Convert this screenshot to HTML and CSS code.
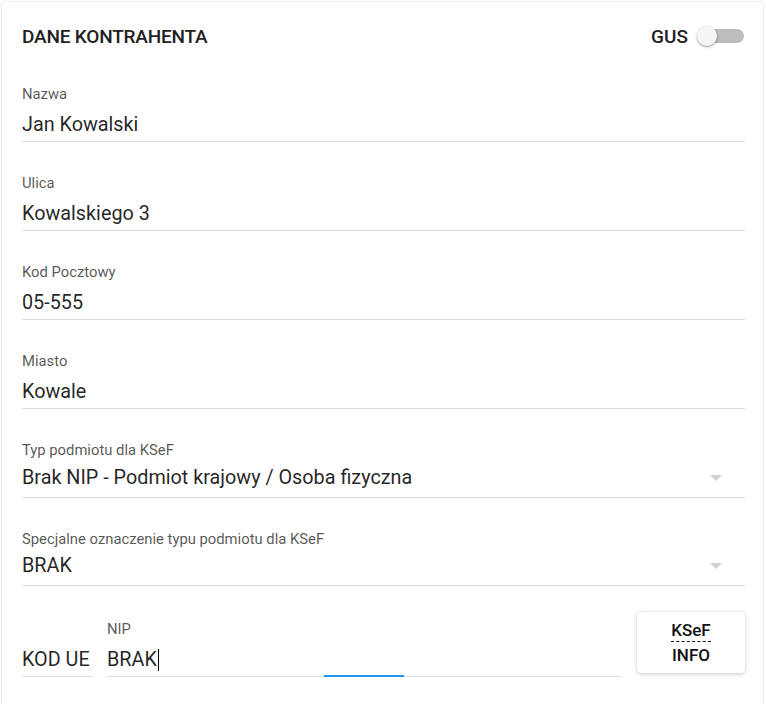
FILE: index.html
```html
<!DOCTYPE html>
<html lang="pl">
<head>
<meta charset="utf-8">
<link rel="stylesheet" href="styles.css">
</head>
<body>
<div class="page">
  <div class="card">
    <div class="card-header">
      <div class="title">DANE KONTRAHENTA</div>
      <div class="gus">
        <span class="gus-label">GUS</span>
        <span class="switch"><span class="track"></span><span class="thumb"></span></span>
      </div>
    </div>

    <div class="field">
      <div class="label">Nazwa</div>
      <div class="value">Jan Kowalski</div>
    </div>
    <div class="field">
      <div class="label">Ulica</div>
      <div class="value">Kowalskiego 3</div>
    </div>
    <div class="field">
      <div class="label">Kod Pocztowy</div>
      <div class="value">05-555</div>
    </div>
    <div class="field">
      <div class="label">Miasto</div>
      <div class="value">Kowale</div>
    </div>
    <div class="field select">
      <div class="label">Typ podmiotu dla KSeF</div>
      <div class="value"><span>Brak NIP - Podmiot krajowy / Osoba fizyczna</span><span class="arrow"></span></div>
    </div>
    <div class="field select last">
      <div class="label">Specjalne oznaczenie typu podmiotu dla KSeF</div>
      <div class="value"><span>BRAK</span><span class="arrow"></span></div>
    </div>

    <div class="bottom-row">
      <div class="field kod">
        <div class="label">&nbsp;</div>
        <div class="value">KOD UE</div>
      </div>
      <div class="field nip">
        <div class="label">NIP</div>
        <div class="value">BRAK<span class="caret"></span></div>
        <div class="focus-bar"></div>
      </div>
      <button class="ksef-btn"><span class="ksef">KSeF</span><span class="info">INFO</span></button>
    </div>
  </div>
</div>
</body>
</html>
```

FILE: styles.css
```css
* { box-sizing: border-box; }
html, body { margin: 0; padding: 0; background: #ffffff; }
body { font-family: Roboto, "Noto Sans", "Liberation Sans", sans-serif; color: rgba(0,0,0,0.87); }

.page { padding: 2px 2px 0 2px; }

.card {
  width: 761px;
  min-height: 720px;
  background: #fff;
  border-radius: 4px;
  box-shadow: 0 0 2px rgba(0,0,0,0.18), 0 1px 3px rgba(0,0,0,0.08);
  padding: 16px 18px 20px 20px;
  display: flex;
  flex-direction: column;
}

.card-header {
  height: 36px;
  display: flex;
  align-items: center;
  justify-content: space-between;
  margin-bottom: 30px;
}
.title {
  font-size: 19px;
  font-weight: 500;
  color: #212121;
  letter-spacing: -0.2px;
}
.gus { display: flex; align-items: center; gap: 9px; }
.gus-label { font-size: 19px; font-weight: 500; color: #212121; }
.switch { position: relative; width: 48px; height: 20px; display: inline-block; }
.track {
  position: absolute; left: 2px; top: 3px; width: 45px; height: 14px;
  border-radius: 7px; background: #bdbdbd;
}
.thumb {
  position: absolute; left: 0; top: 0; width: 20px; height: 20px;
  border-radius: 50%; background: #f5f5f5;
  box-shadow: 0 1px 3px rgba(0,0,0,0.3), 0 1px 1px rgba(0,0,0,0.14);
}

.field {
  display: flex;
  flex-direction: column;
  border-bottom: 1px solid #dedede;
  margin-bottom: 31px;
  position: relative;
}
.label {
  font-size: 14.8px;
  line-height: 20px;
  color: rgba(0,0,0,0.68);
  margin-bottom: 7px;
}
.value {
  font-size: 19.8px;
  line-height: 28px;
  padding-bottom: 2px;
  color: rgba(0,0,0,0.87);
  display: flex;
  align-items: center;
}
.select .value { justify-content: space-between; padding-bottom: 5px; line-height: 28px; margin-top: -3px; }
.select.last { margin-bottom: 26px; }
.select.last .label { margin-bottom: 6px; }
.arrow {
  width: 0; height: 0;
  border-left: 6px solid transparent;
  border-right: 6px solid transparent;
  border-top: 6px solid #d0d0d0;
  margin-right: 23px;
}

.bottom-row {
  display: flex;
  align-items: flex-end;
  gap: 15px;
}
.bottom-row .field { margin-bottom: 0; }
.kod { width: 70px; }
.nip { width: 514px; }
.caret { display: inline-block; width: 1px; height: 22px; background: #000; margin-left: 1px; }
.focus-bar {
  position: absolute; left: 217px; bottom: -1px; width: 80px; height: 2px; background: #2196f3;
}
.ksef-btn {
  margin-left: 1px;
  width: 108px;
  height: 61px;
  margin-bottom: 4px;
  border: none;
  border-radius: 4px;
  background: #fff;
  box-shadow: 0 1px 4px rgba(0,0,0,0.2), 0 0 1px rgba(0,0,0,0.12);
  display: flex;
  flex-direction: column;
  align-items: center;
  justify-content: center;
  gap: 3px;
  font-family: Roboto, "Noto Sans", sans-serif;
  font-size: 17px;
  font-weight: 500;
  color: #111;
  padding: 0;
}
.ksef { border-bottom: 1px dashed #111; line-height: 20px; padding-bottom: 1px; }
.info { line-height: 20px; }
```
